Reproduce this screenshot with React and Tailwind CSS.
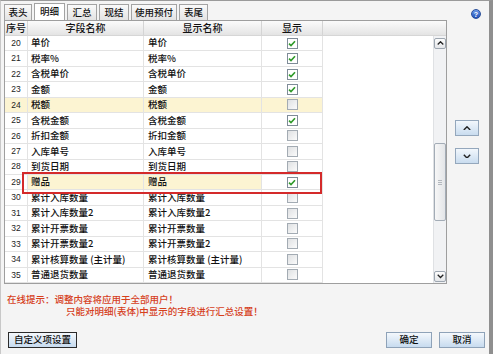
import React from "react";

const rows = [
  { n: 20, a: "单价", c: true },
  { n: 21, a: "税率%", c: true },
  { n: 22, a: "含税单价", c: true },
  { n: 23, a: "金额", c: true },
  { n: 24, a: "税额", c: false, hl: "all" },
  { n: 25, a: "含税金额", c: true },
  { n: 26, a: "折扣金额", c: false },
  { n: 27, a: "入库单号", c: false },
  { n: 28, a: "到货日期", c: false },
  { n: 29, a: "赠品", c: true, hl: "mid" },
  { n: 30, a: "累计入库数量", c: false },
  { n: 31, a: "累计入库数量2", c: false },
  { n: 32, a: "累计开票数量", c: false },
  { n: 33, a: "累计开票数量2", c: false },
  { n: 34, a: "累计核算数量 (主计量)", c: false },
  { n: 35, a: "普通退货数量", c: false },
];

const CJK = { fontFamily: '"Noto Sans CJK SC", "Noto Sans", sans-serif' };
const NUM = { fontFamily: '"Liberation Sans", Arial, sans-serif' };

function Check({ on }) {
  if (on) {
    return (
      <div className="w-[11px] h-[11px] border border-[#7f8c98] bg-white flex items-center justify-center">
        <svg width="8" height="7" viewBox="0 0 8 7">
          <path d="M1 3.6 L3 5.6 L7 1.2" fill="none" stroke="#2f9a2a" strokeWidth="1.6" />
        </svg>
      </div>
    );
  }
  return <div className="w-[11px] h-[11px] border border-[#a3abb3] bg-gradient-to-br from-[#dfe1e3] to-[#fbfbfb]" />;
}

function Chevron({ up, size = 7, color = "#222" }) {
  return (
    <svg width={size} height={size * 0.6} viewBox="0 0 10 6">
      <path d={up ? "M1 5 L5 1 L9 5" : "M1 1 L5 5 L9 1"} fill="none" stroke={color} strokeWidth="1.8" />
    </svg>
  );
}

const tabs = [
  { t: "表头", w: "w-[28px]" },
  { t: "明细", w: "w-[31px]", active: true },
  { t: "汇总", w: "w-[30px]" },
  { t: "现结", w: "w-[30px]" },
  { t: "使用预付", w: "w-[46px]" },
  { t: "表尾", w: "w-[29px]" },
];

export default function App() {
  return (
    <div
      className="w-[493px] h-[354px] bg-[#f4f4f4] border-l border-l-[#c8c8c8] border-r-4 border-r-[#8f8f8f] border-t border-t-[#9a9a9a] flex flex-col overflow-hidden text-[#111]"
      style={CJK}
    >
      {/* tab row */}
      <div className="flex items-end pl-[3px] pt-[2px] h-[19px]">
        <div className="flex gap-[2px] items-end">
          {tabs.map((t) => (
            <div
              key={t.t}
              className={`${t.w} flex items-center justify-center text-[9.5px] font-medium leading-none border border-[#a3a3a3] border-b-0 ${
                t.active ? "h-[17px] bg-white" : "h-[16px] bg-gradient-to-b from-[#fafafa] to-[#e3e3e3]"
              }`}
            >
              {t.t}
            </div>
          ))}
        </div>
        <div className="ml-auto mr-[8px] mb-[1px] w-[10px] h-[10px] rounded-full bg-gradient-to-b from-[#6f9be8] to-[#1f4fb8] border border-[#2a4f9a] flex items-center justify-center text-white text-[7px] font-bold leading-none" style={NUM}>
          ?
        </div>
      </div>

      {/* middle */}
      <div className="flex">
        <div className="ml-[3px] w-[443px] h-[264px] border border-[#9e9e9e] bg-white flex relative">
          <div className="w-[428px] flex flex-col">
            {/* header */}
            <div className="grid grid-cols-[23px_116px_118px_61px_1fr] h-[15px] bg-gradient-to-b from-[#fbfbfb] to-[#e4e4e4] border-b border-b-[#d6d6d6] text-[10px] font-medium leading-none">
              <div className="flex items-center pl-[1px] border-r border-r-[#d4d4d4]">序号</div>
              <div className="flex items-center justify-center border-r border-r-[#d4d4d4]">字段名称</div>
              <div className="flex items-center justify-center border-r border-r-[#d4d4d4]">显示名称</div>
              <div className="flex items-center justify-center border-r border-r-[#d4d4d4]">显示</div>
              <div />
            </div>
            {/* rows */}
            <div className="flex-1 flex flex-col">
              {rows.map((r) => {
                const yAll = r.hl === "all" ? "bg-[#fcf4d2]" : "bg-white";
                const yMid = r.hl ? "bg-[#fcf4d2]" : "bg-white";
                return (
                  <div key={r.n} className="flex-1 grid grid-cols-[23px_116px_118px_61px_1fr] text-[9.5px] font-medium leading-none">
                    <div className={`${yAll} flex items-center justify-center border-r border-b border-[#e3e3e3] text-[8.5px] font-normal text-[#222]`} style={NUM}>
                      {r.n}
                    </div>
                    <div className={`${yMid} flex items-center pl-[3px] border-r border-b border-[#e3e3e3] whitespace-nowrap`}>{r.a}</div>
                    <div className={`${yMid} flex items-center pl-[4px] border-r border-b border-[#e3e3e3] whitespace-nowrap`}>{r.a}</div>
                    <div className={`${yAll} flex items-center justify-center border-r border-b border-[#e3e3e3]`}>
                      <Check on={r.c} />
                    </div>
                    <div className="bg-white" />
                  </div>
                );
              })}
            </div>
          </div>
          {/* scrollbar */}
          <div className="w-[13px] flex flex-col">
            <div className="h-[15px] bg-gradient-to-b from-[#fbfbfb] to-[#e4e4e4] border-b border-b-[#d6d6d6]" />
            <div className="flex-1 flex flex-col items-center bg-[#f1f2f4] border-l border-l-[#dfe1e4]">
              <div className="mt-[2px] w-[12px] h-[11px] rounded-[2px] border border-[#9da6b0] bg-gradient-to-b from-[#fdfdfd] to-[#e4e6e9] flex items-center justify-center">
                <Chevron up size={7} />
              </div>
              <div className="mt-[94px] w-[12px] h-[78px] rounded-[2px] border border-[#a3acb6] bg-gradient-to-r from-[#f7f7f7] to-[#e3e5e8] flex flex-col items-center justify-center gap-[1px]">
                <div className="w-[4px] h-px bg-[#b3b8be]" />
                <div className="w-[4px] h-px bg-[#b3b8be]" />
                <div className="w-[4px] h-px bg-[#b3b8be]" />
              </div>
              <div className="mt-auto mb-[1px] w-[12px] h-[11px] rounded-[2px] border border-[#9da6b0] bg-gradient-to-b from-[#fdfdfd] to-[#e4e6e9] flex items-center justify-center">
                <Chevron size={7} />
              </div>
            </div>
          </div>
          {/* red highlight box */}
          <div className="absolute left-[17px] top-[151px] w-[300px] h-[22px] border-2 border-[#d42a2a]" />
        </div>

        {/* right panel */}
        <div className="flex-1 pl-[8px] pt-[100px] flex flex-col gap-[12px]">
          <div className="w-[24px] h-[16px] border border-[#94a7bc] bg-gradient-to-b from-[#f2f7fc] to-[#c9dcef] flex items-center justify-center">
            <Chevron up size={8} />
          </div>
          <div className="w-[24px] h-[16px] border border-[#94a7bc] bg-gradient-to-b from-[#f2f7fc] to-[#c9dcef] flex items-center justify-center">
            <Chevron size={8} />
          </div>
        </div>
      </div>

      {/* hint text */}
      <div className="mt-[9px] pl-[6px] text-[9.5px] font-medium leading-[12px] text-[#d6401c] whitespace-nowrap">
        <div>在线提示：调整内容将应用于全部用户！</div>
        <div className="pl-[59px]">只能对明细(表体)中显示的字段进行汇总设置！</div>
      </div>

      {/* bottom buttons */}
      <div className="mt-auto mb-[6px] flex items-center pl-[7px] pr-[4px]">
        <div className="w-[69px] h-[16px] border border-[#2b2b2b] bg-gradient-to-b from-[#f4f8fc] to-[#c7dbef] flex items-center justify-center text-[9.5px] font-medium leading-none">
          自定义项设置
        </div>
        <div className="ml-auto w-[46px] h-[16px] border border-[#8ea2b8] bg-gradient-to-b from-[#f4f8fc] to-[#c7dbef] flex items-center justify-center text-[9.5px] font-medium leading-none">
          确定
        </div>
        <div className="ml-[7px] w-[46px] h-[16px] border border-[#8ea2b8] bg-gradient-to-b from-[#f4f8fc] to-[#c7dbef] flex items-center justify-center text-[9.5px] font-medium leading-none">
          取消
        </div>
      </div>
    </div>
  );
}
